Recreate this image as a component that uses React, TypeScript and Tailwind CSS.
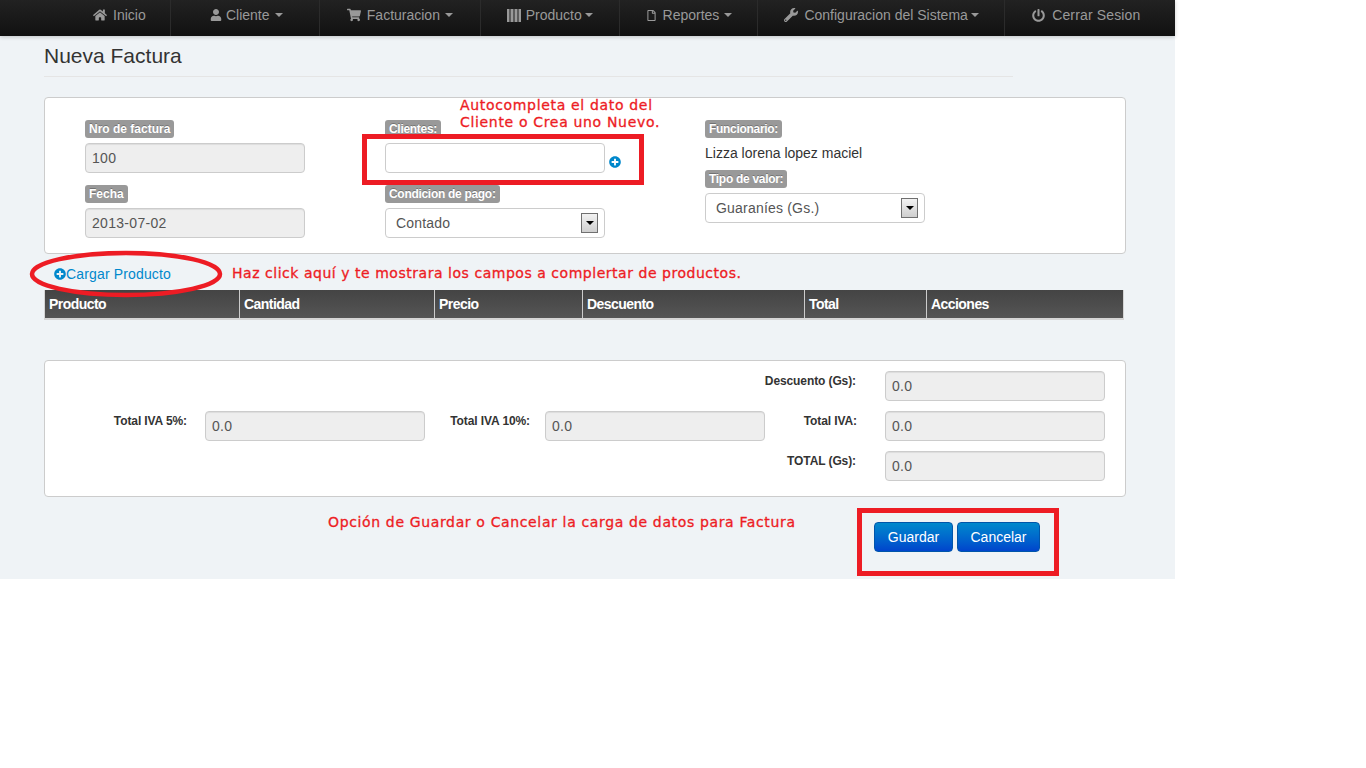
import React from 'react';
import { FaHome, FaUser, FaShoppingCart, FaRegFile, FaWrench, FaPowerOff, FaPlusCircle } from 'react-icons/fa';

// FA3 style barcode, the package one is too thin at this size
const BarcodeIcon = ({ size }: { size: number }) => (
    <svg width={size} height={13} viewBox="0 0 14 13" fill="currentColor">
        <rect x="0" y="0" width="2" height="13" />
        <rect x="2.5" y="0" width="1" height="13" />
        <rect x="4" y="0" width="2" height="13" />
        <rect x="6.5" y="0" width="1" height="13" />
        <rect x="8" y="0" width="2" height="13" />
        <rect x="10.5" y="0" width="1" height="13" />
        <rect x="12" y="0" width="2" height="13" />
    </svg>
);

const navItems = [
    { label: "Inicio", icon: FaHome, box: "w-[96px] pl-[18px]", gap: "ml-[6px]", caret: "", iconSize: 14 },
    { label: "Cliente", icon: FaUser, box: "w-[149px] pl-[39px]", gap: "ml-[4px]", caret: "ml-[5px]", iconSize: 12 },
    { label: "Facturacion", icon: FaShoppingCart, box: "w-[161px] pl-[27px]", gap: "ml-[6px]", caret: "ml-[5px]", iconSize: 14 },
    { label: "Producto", icon: BarcodeIcon, box: "w-[139px] pl-[26px]", gap: "ml-[5px]", caret: "ml-[3px]", iconSize: 14 },
    { label: "Reportes", icon: FaRegFile, box: "w-[139px] pl-[26px]", gap: "ml-[6px]", caret: "ml-[5px]", iconSize: 11 },
    { label: "Configuracion del Sistema", icon: FaWrench, box: "w-[247px] pl-[26px]", gap: "ml-[6px]", caret: "ml-[3px]", iconSize: 14 },
    { label: "Cerrar Sesion", icon: FaPowerOff, box: "w-[170px] pl-[27px]", gap: "ml-[7px] tracking-[0.15px]", caret: "", iconSize: 13 },
];

const columns = [
    { label: "Producto", width: "w-[195px]" },
    { label: "Cantidad", width: "w-[195px]" },
    { label: "Precio", width: "w-[148px]" },
    { label: "Descuento", width: "w-[222px]" },
    { label: "Total", width: "w-[122px]" },
    { label: "Acciones", width: "flex-1" },
];

const Badge = ({ text, tight = false }: { text: string; tight?: boolean }) => (
    <span className={`block w-fit h-[18px] leading-[18px] px-[4px] rounded-[3px] bg-[#999999] text-white text-[12px] font-bold [text-shadow:0_-1px_0_rgba(0,0,0,0.25)] ${tight ? "tracking-[-0.3px]" : ""}`}>
        {text}
    </span>
);

const ReadOnlyInput = ({ value }: { value: string }) => (
    <div className="w-[220px] h-[30px] leading-[28px] px-[6px] rounded-[4px] border border-[#cccccc] bg-[#eeeeee] text-[14px] tracking-[0.3px] text-[#555555] shadow-[inset_0_1px_1px_rgba(0,0,0,0.075)]">
        {value}
    </div>
);

const SelectBox = ({ value }: { value: string }) => (
    <div className="w-[220px] h-[30px] flex items-center justify-between pl-[10px] pr-[6px] rounded-[4px] border border-[#cccccc] bg-white text-[14px] tracking-[0.2px] text-[#555555]">
        <span>{value}</span>
        <span className="w-[17px] h-[20px] flex items-center justify-center border border-[#707070] bg-gradient-to-b from-[#f2f2f2] to-[#cfcfcf]">
            <span className="w-0 h-0 border-x-[4px] border-x-transparent border-t-[4px] border-t-black" />
        </span>
    </div>
);

const TotalRow = ({ label, labelBox, value }: { label: string; labelBox: string; value: string }) => (
    <div className="flex items-center">
        <span className={`${labelBox} text-right text-[12px] font-bold tracking-[-0.1px] text-[#333333] relative top-[-5px]`}>{label}</span>
        <ReadOnlyInput value={value} />
    </div>
);

const Note = ({ className, children }: { className: string; children: React.ReactNode }) => (
    <div className={`absolute font-['DejaVu_Sans',sans-serif] text-[#ed1c24] text-[14px] [-webkit-text-stroke:0.3px_#ed1c24] whitespace-nowrap ${className}`}>
        {children}
    </div>
);

const App = () => {
    return (
        <div className="relative min-h-[768px] bg-white font-['Liberation_Sans',Arial,sans-serif]">
            <div className="w-[1175px] h-[579px] bg-[#eff3f6]">

                {/* Top navigation */}
                <nav className="h-[36px] pl-[75px] flex bg-gradient-to-b from-[#222222] to-[#111111] shadow-[0_1px_4px_rgba(0,0,0,0.2)]">
                    {navItems.map((item, i) => {
                        const Icon = item.icon;
                        return (
                            <div
                                key={item.label}
                                className={`${item.box} h-full pb-[6px] flex items-center text-[14px] text-[#999999] ${i < navItems.length - 1 ? "border-r border-[#2b2b2b]" : ""}`}
                            >
                                <Icon size={item.iconSize} />
                                <span className={item.gap}>{item.label}</span>
                                {item.caret && (
                                    <span className={`${item.caret} w-0 h-0 border-x-[4px] border-x-transparent border-t-[4px] border-t-[#999999]`} />
                                )}
                            </div>
                        );
                    })}
                </nav>

                <main className="pl-[44px] w-[1126px]">
                    <div className="w-[969px] h-[41px] border-b border-[#e5e5e5]">
                        <h1 className="pt-[8px] text-[21px] leading-[24px] text-[#333333]">Nueva Factura</h1>
                    </div>

                    {/* Invoice header */}
                    <section className="mt-[20px] h-[157px] pt-[22px] pl-[40px] flex rounded-[4px] border border-[#cccccc] bg-white">
                        <div className="w-[300px] flex flex-col">
                            <Badge text="Nro de factura" />
                            <div className="mt-[5px]"><ReadOnlyInput value="100" /></div>
                            <div className="mt-[12px]"><Badge text="Fecha" /></div>
                            <div className="mt-[5px]"><ReadOnlyInput value="2013-07-02" /></div>
                        </div>
                        <div className="w-[320px] flex flex-col">
                            <Badge text="Clientes:" tight />
                            <div className="mt-[5px] flex items-end">
                                <div className="w-[220px] h-[30px] rounded-[4px] border border-[#cccccc] bg-white" />
                                <FaPlusCircle size={12} className="ml-[4px] mb-[5px] text-[#0088cc]" />
                            </div>
                            <div className="mt-[12px]"><Badge text="Condicion de pago:" tight /></div>
                            <div className="mt-[5px]"><SelectBox value="Contado" /></div>
                        </div>
                        <div className="flex flex-col">
                            <Badge text="Funcionario:" tight />
                            <p className="mt-[5px] h-[27px] leading-[20px] text-[14px] text-[#333333]">Lizza lorena lopez maciel</p>
                            <Badge text="Tipo de valor:" tight />
                            <div className="mt-[5px]"><SelectBox value="Guaraníes (Gs.)" /></div>
                        </div>
                    </section>

                    <a className="mt-[12px] ml-[10px] h-[16px] flex items-center text-[14px] tracking-[0.15px] text-[#0088cc]">
                        <FaPlusCircle size={12} />
                        <span>Cargar Producto</span>
                    </a>

                    {/* Product table header */}
                    <div className="mt-[8px] w-[1080px] h-[30px] flex items-center border-x border-b-2 border-[#d5d5d5] bg-gradient-to-b from-[#444444] to-[#555555]">
                        {columns.map((col) => (
                            <div key={col.label} className={`${col.width} h-full pl-[4px] leading-[28px] text-[14px] tracking-[-0.55px] font-bold text-white border-r border-[#cccccc] last:border-r-0`}>
                                {col.label}
                            </div>
                        ))}
                    </div>

                    {/* Totals */}
                    <section className="mt-[40px] h-[137px] pt-[10px] flex flex-col gap-[10px] rounded-[4px] border border-[#cccccc] bg-white">
                        <div className="flex justify-end pr-[20px]">
                            <TotalRow label="Descuento (Gs):" labelBox="w-[120px] mr-[29px]" value="0.0" />
                        </div>
                        <div className="flex pl-[22px] pr-[20px]">
                            <TotalRow label="Total IVA 5%:" labelBox="w-[120px] mr-[18px]" value="0.0" />
                            <TotalRow label="Total IVA 10%:" labelBox="w-[105px] mr-[15px]" value="0.0" />
                            <div className="ml-auto">
                                <TotalRow label="Total IVA:" labelBox="w-[92px] mr-[28px]" value="0.0" />
                            </div>
                        </div>
                        <div className="flex justify-end pr-[20px]">
                            <TotalRow label="TOTAL (Gs):" labelBox="w-[120px] mr-[29px]" value="0.0" />
                        </div>
                    </section>

                    <div className="mt-[25px] ml-[830px] flex gap-[4px]">
                        <button className="w-[79px] h-[30px] rounded-[4px] border border-[#0055aa] bg-gradient-to-b from-[#0088cc] to-[#0044cc] text-[14px] text-white">
                            Guardar
                        </button>
                        <button className="w-[83px] h-[30px] rounded-[4px] border border-[#0055aa] bg-gradient-to-b from-[#0088cc] to-[#0044cc] text-[14px] text-white">
                            Cancelar
                        </button>
                    </div>
                </main>
            </div>

            {/* Red annotations on top of the screenshot */}
            <Note className="left-[460px] top-[97px] leading-[17px] tracking-[0.67px]">
                Autocompleta el dato del<br />Cliente o Crea uno Nuevo.
            </Note>
            <Note className="left-[232px] top-[263px] tracking-[0.53px]">Haz click aquí y te mostrara los campos a complertar de productos.</Note>
            <Note className="left-[328px] top-[512px] tracking-[0.64px]">Opción de Guardar o Cancelar la carga de datos para Factura</Note>
            <div className="absolute left-[362px] top-[134px] w-[282px] h-[51px] border-[5px] border-[#ed1c24]" />
            <div className="absolute left-[857px] top-[508px] w-[202px] h-[68px] border-[5px] border-[#ed1c24]" />
            <svg className="absolute left-[28px] top-[250px]" width="196" height="48" viewBox="0 0 196 48">
                <ellipse cx="98" cy="24" rx="94" ry="21" fill="none" stroke="#ed1c24" strokeWidth="4.5" />
            </svg>
        </div>
    );
};

export default App;
